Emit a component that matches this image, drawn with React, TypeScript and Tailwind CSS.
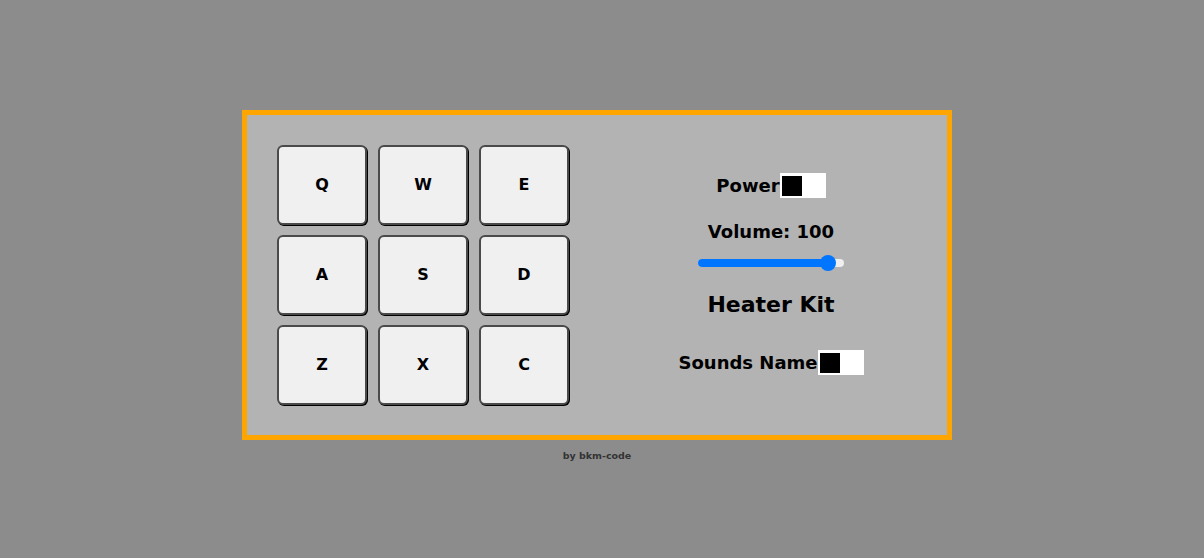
const pads = ['Q', 'W', 'E', 'A', 'S', 'D', 'Z', 'X', 'C']

function Toggle() {
  return (
    <div className="flex h-[25px] w-[46px] items-center bg-white p-[2px]">
      <div className="h-[20px] w-[20px] bg-black" />
    </div>
  )
}

export default function App() {
  return (
    <div
      className="min-h-[558px] w-full bg-[#8c8c8c] pt-[110px] text-black"
      style={{ fontFamily: '"DejaVu Sans", Verdana, sans-serif' }}
    >
      <div className="ml-[242px] w-[710px]">
        <div className="flex h-[330px] items-center border-[5px] border-[#ffa500] bg-[#b3b3b3] pl-[30px]">
          <div className="grid grid-cols-3 gap-x-[11px] gap-y-[10px]">
            {pads.map((k) => (
              <button
                key={k}
                className="flex h-[80px] w-[90px] items-center justify-center rounded-[6px] border-2 border-[#4a4a4a] bg-[#f0f0f0] text-[16px] font-bold shadow-[1px_1px_0_#000]"
              >
                {k}
              </button>
            ))}
          </div>
          <div className="ml-[52px] flex w-[300px] flex-col items-center pb-[2px]">
            <div className="flex items-center">
              <span className="text-[18px] font-bold">Power</span>
              <Toggle />
            </div>
            <div className="mt-[19px] text-[18px] font-bold">Volume: 100</div>
            <div className="relative mt-[14px] h-[8px] w-[146px] rounded-full bg-[#efefef]">
              <div className="h-full w-[130px] rounded-full bg-[#0075ff]" />
              <div className="absolute left-[122px] top-[-4px] h-[16px] w-[16px] rounded-full bg-[#0075ff]" />
            </div>
            <div className="mt-[21px] text-[22px] font-bold">Heater Kit</div>
            <div className="mt-[28px] flex items-center">
              <span className="text-[18px] font-bold">Sounds Name</span>
              <Toggle />
            </div>
          </div>
        </div>
        <div className="mt-[9px] text-center text-[9.5px] font-bold text-[#333]">by bkm-code</div>
      </div>
    </div>
  )
}
